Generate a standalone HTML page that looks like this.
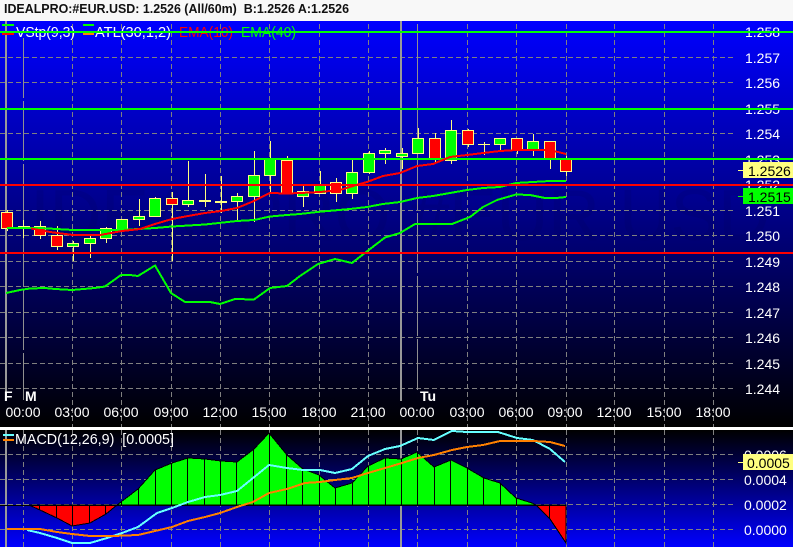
<!DOCTYPE html>
<html><head><meta charset="utf-8"><style>
html,body{margin:0;padding:0;background:#f8f8f8}
svg{display:block}
text{font-family:"Liberation Sans",Arial,sans-serif}
.c{shape-rendering:crispEdges}
.g line{stroke:#808080;stroke-width:1;stroke-dasharray:5 3}
.k line{stroke:#ffff80;stroke-width:1}
.k rect{stroke:#ffff80;stroke-width:1}
.k rect.d{stroke:none;fill:#ffff80}
.k rect.gb,.k rect.rb{width:11px;transform:translateX(-1px)}
.gb{fill:#00ff00}.rb{fill:#ff0000}
.l{fill:none;stroke-width:2;shape-rendering:crispEdges}
.ax text{fill:#fff;font-size:14px}
.t text{fill:#fff;font-size:14px;text-anchor:middle}
.h line{stroke:#000;stroke-width:1}
</style></head><body>
<svg width="793" height="547" viewBox="0 0 793 547" xmlns="http://www.w3.org/2000/svg">
<defs>
<linearGradient id="a" x1="0" y1="0" x2="0" y2="1"><stop offset="0" stop-color="#0000ff"/><stop offset="1" stop-color="#000000"/></linearGradient>
<linearGradient id="b" x1="0" y1="0" x2="0" y2="1"><stop offset="0" stop-color="#000000"/><stop offset="1" stop-color="#0000ff"/></linearGradient>
</defs>
<rect width="793" height="21" fill="#f8f8f8"/>
<rect y="21" width="793" height="406" fill="url(#a)"/>
<rect y="427" width="793" height="3" fill="#ffffff"/>
<rect y="430" width="793" height="117" fill="url(#b)"/>
<text x="4" y="13" font-size="13" font-weight="bold" fill="#111" textLength="345" lengthAdjust="spacingAndGlyphs" xml:space="preserve">IDEALPRO:#EUR.USD: 1.2526 (All/60m)  B:1.2526 A:1.2526</text>

<text x="30" y="240" font-size="72" fill="#000050" fill-opacity="0.13" textLength="740" lengthAdjust="spacing">IDEALPRO:#EUR.USD</text>

<g class="g c">
<line x1="0" x2="735" y1="57.5" y2="57.5"/><line x1="0" x2="735" y1="82.5" y2="82.5"/><line x1="0" x2="735" y1="133.5" y2="133.5"/><line x1="0" x2="735" y1="210.5" y2="210.5"/><line x1="0" x2="735" y1="235.5" y2="235.5"/><line x1="0" x2="735" y1="261.5" y2="261.5"/><line x1="0" x2="735" y1="286.5" y2="286.5"/><line x1="0" x2="735" y1="312.5" y2="312.5"/><line x1="0" x2="735" y1="337.5" y2="337.5"/><line x1="0" x2="735" y1="363.5" y2="363.5"/><line x1="0" x2="735" y1="388.5" y2="388.5"/>
<line x1="0" x2="735" y1="454.5" y2="454.5"/><line x1="0" x2="735" y1="479.5" y2="479.5"/><line x1="0" x2="735" y1="504.5" y2="504.5"/><line x1="0" x2="735" y1="529.5" y2="529.5"/>
<line x1="72.5" x2="72.5" y1="24" y2="427"/><line x1="121.5" x2="121.5" y1="24" y2="427"/><line x1="171.5" x2="171.5" y1="24" y2="427"/><line x1="220.5" x2="220.5" y1="24" y2="427"/><line x1="269.5" x2="269.5" y1="24" y2="427"/><line x1="319.5" x2="319.5" y1="24" y2="427"/><line x1="368.5" x2="368.5" y1="24" y2="427"/><line x1="467.5" x2="467.5" y1="24" y2="427"/><line x1="516.5" x2="516.5" y1="24" y2="427"/><line x1="566.5" x2="566.5" y1="24" y2="427"/><line x1="614.5" x2="614.5" y1="24" y2="427"/><line x1="664.5" x2="664.5" y1="24" y2="427"/><line x1="713.5" x2="713.5" y1="24" y2="427"/>
<line x1="23.5" x2="23.5" y1="430" y2="547"/><line x1="72.5" x2="72.5" y1="430" y2="547"/><line x1="121.5" x2="121.5" y1="430" y2="547"/><line x1="171.5" x2="171.5" y1="430" y2="547"/><line x1="220.5" x2="220.5" y1="430" y2="547"/><line x1="269.5" x2="269.5" y1="430" y2="547"/><line x1="319.5" x2="319.5" y1="430" y2="547"/><line x1="368.5" x2="368.5" y1="430" y2="547"/><line x1="417.5" x2="417.5" y1="430" y2="547"/><line x1="467.5" x2="467.5" y1="430" y2="547"/><line x1="516.5" x2="516.5" y1="430" y2="547"/><line x1="566.5" x2="566.5" y1="430" y2="547"/><line x1="614.5" x2="614.5" y1="430" y2="547"/><line x1="664.5" x2="664.5" y1="430" y2="547"/><line x1="713.5" x2="713.5" y1="430" y2="547"/>
</g>
<g class="c">
<line x1="23.5" x2="23.5" y1="38" y2="400" stroke="#909090" stroke-dasharray="60 3"/>
<line x1="417.5" x2="417.5" y1="24" y2="390" stroke="#909090" stroke-dasharray="60 3"/>
<rect x="5" y="21" width="2" height="380" fill="#999"/>
<rect x="400" y="21" width="2" height="380" fill="#999"/>
<rect x="5" y="430" width="2" height="117" fill="#999"/>
<rect x="400" y="430" width="2" height="117" fill="#999"/>
</g>

<g class="ax">
<text x="745" y="37">1.258</text><text x="745" y="63">1.257</text><text x="745" y="88">1.256</text><text x="745" y="114">1.255</text><text x="745" y="139">1.254</text><text x="745" y="165">1.253</text><text x="745" y="190">1.252</text><text x="745" y="216">1.251</text><text x="745" y="241">1.250</text><text x="745" y="267">1.249</text><text x="745" y="292">1.248</text><text x="745" y="318">1.247</text><text x="745" y="343">1.246</text><text x="745" y="369">1.245</text><text x="745" y="394">1.244</text>
<text x="744" y="460">0.0006</text><text x="744" y="485">0.0004</text><text x="744" y="510">0.0002</text><text x="744" y="535">0.0000</text>
</g>
<g class="t">
<text x="23" y="417">00:00</text><text x="72" y="417">03:00</text><text x="121" y="417">06:00</text><text x="171" y="417">09:00</text><text x="220" y="417">12:00</text><text x="269" y="417">15:00</text><text x="319" y="417">18:00</text><text x="368" y="417">21:00</text><text x="417" y="417">00:00</text><text x="467" y="417">03:00</text><text x="516" y="417">06:00</text><text x="565" y="417">09:00</text><text x="614" y="417">12:00</text><text x="664" y="417">15:00</text><text x="713" y="417">18:00</text>
</g>
<g font-size="14" font-weight="bold" fill="#fff">
<text x="4" y="401">F</text><text x="25" y="401">M</text><text x="420" y="401">Tu</text>
</g>

<g class="c k">
<line x1="7.5" x2="7.5" y1="210" y2="231"/><rect class="rb" x="2.5" y="212.5" width="10" height="16"/>
<line x1="23.5" x2="23.5" y1="220" y2="238"/><rect class="d" x="18" y="226" width="12" height="1"/>
<line x1="40.5" x2="40.5" y1="221" y2="239"/><rect class="rb" x="35.5" y="226.5" width="10" height="9"/>
<line x1="57.5" x2="57.5" y1="226" y2="250"/><rect class="rb" x="52.5" y="235.5" width="10" height="11"/>
<line x1="73.5" x2="73.5" y1="241" y2="261"/><rect class="gb" x="68.5" y="243.5" width="10" height="3"/>
<line x1="90.5" x2="90.5" y1="236" y2="258"/><rect class="gb" x="85.5" y="238.5" width="10" height="5"/>
<line x1="106.5" x2="106.5" y1="227" y2="243"/><rect class="gb" x="101.5" y="228.5" width="10" height="10"/>
<rect class="gb" x="117.5" y="219.5" width="10" height="11"/>
<line x1="139.5" x2="139.5" y1="199" y2="226"/><rect class="gb" x="134.5" y="216.5" width="10" height="3"/>
<line x1="155.5" x2="155.5" y1="197" y2="217"/><rect class="gb" x="150.5" y="198.5" width="10" height="18"/>
<line x1="172.5" x2="172.5" y1="192" y2="261"/><rect class="rb" x="167.5" y="198.5" width="10" height="6"/>
<line x1="188.5" x2="188.5" y1="161" y2="207"/><rect class="gb" x="183.5" y="200.5" width="10" height="4"/>
<line x1="205.5" x2="205.5" y1="174" y2="207"/><rect class="d" x="199" y="200" width="12" height="2"/>
<line x1="221.5" x2="221.5" y1="176" y2="213"/><rect class="d" x="215" y="201" width="12" height="2"/>
<line x1="237.5" x2="237.5" y1="193" y2="221"/><rect class="gb" x="232.5" y="196.5" width="10" height="5"/>
<line x1="254.5" x2="254.5" y1="151" y2="222"/><rect class="gb" x="249.5" y="175.5" width="10" height="21"/>
<line x1="270.5" x2="270.5" y1="141" y2="193"/><rect class="gb" x="265.5" y="159.5" width="10" height="16"/>
<line x1="287.5" x2="287.5" y1="156" y2="194"/><rect class="rb" x="282.5" y="160.5" width="10" height="33"/>
<line x1="303.5" x2="303.5" y1="186" y2="207"/><rect class="gb" x="298.5" y="191.5" width="10" height="5"/>
<line x1="320.5" x2="320.5" y1="171" y2="194"/><rect class="gb" x="315.5" y="185.5" width="10" height="8"/>
<line x1="336.5" x2="336.5" y1="178" y2="202"/><rect class="rb" x="331.5" y="182.5" width="10" height="11"/>
<line x1="352.5" x2="352.5" y1="160" y2="199"/><rect class="gb" x="347.5" y="172.5" width="10" height="21"/>
<line x1="369.5" x2="369.5" y1="151" y2="174"/><rect class="gb" x="364.5" y="153.5" width="10" height="19"/>
<line x1="385.5" x2="385.5" y1="148" y2="164"/><rect class="gb" x="380.5" y="150.5" width="10" height="3"/>
<line x1="402.5" x2="402.5" y1="148" y2="169"/><rect class="gb" x="397.5" y="153.5" width="10" height="3"/>
<line x1="418.5" x2="418.5" y1="128" y2="154"/><rect class="gb" x="413.5" y="138.5" width="10" height="15"/>
<line x1="435.5" x2="435.5" y1="133" y2="163"/><rect class="rb" x="430.5" y="138.5" width="10" height="20"/>
<line x1="451.5" x2="451.5" y1="120" y2="164"/><rect class="gb" x="446.5" y="130.5" width="10" height="30"/>
<line x1="468.5" x2="468.5" y1="129" y2="147"/><rect class="rb" x="463.5" y="130.5" width="10" height="14"/>
<line x1="484.5" x2="484.5" y1="142" y2="155"/><rect class="d" x="478" y="144" width="12" height="1"/>
<line x1="500.5" x2="500.5" y1="138" y2="151"/><rect class="gb" x="495.5" y="138.5" width="10" height="6"/>
<line x1="517.5" x2="517.5" y1="138" y2="154"/><rect class="rb" x="512.5" y="138.5" width="10" height="12"/>
<line x1="533.5" x2="533.5" y1="134" y2="156"/><rect class="gb" x="528.5" y="141.5" width="10" height="9"/>
<line x1="550.5" x2="550.5" y1="141" y2="169"/><rect class="rb" x="545.5" y="141.5" width="10" height="18"/>
<line x1="566.5" x2="566.5" y1="156" y2="176"/><rect class="rb" x="561.5" y="159.5" width="10" height="12"/>
</g>

<g class="c">
<rect x="0" y="108" width="793" height="2" fill="#00ff00"/>
<rect x="0" y="158" width="793" height="2" fill="#00ff00"/>
</g>
<polyline class="l" stroke="#00ff00" points="6,293 20,290 30,288.5 45,288 55,289 72,290 95,288 105,286.5 121,275 130,275 138,276 155,265.5 171,293 185,302 210,302 220,304 235,299 254,299.5 270,288 287,286 300,276 318,264 335,259 352,263 370,249 385,237.5 400,233 415,224 452,224 470,217 483,207 497,200 516,194.5 530,195 545,198 556,198 566,197"/>
<polyline class="l" stroke="#00ff00" points="7,228 40,228 73,230 122,230 155,228 172,226.5 205,224.5 237,221 254,220 270,216.5 287,215 300,214 317,212 350,209 367,207 383,204 400,202 417,198 433,196 450,193 467,190 483,188 500,187 516,183 533,182 550,181 566,181"/>
<polyline class="l" stroke="#ff0000" points="31,228.5 50,232 73,235 100,235 122,231 140,229 155,224 172,219 188,216 205,213 221,211 237,208 254,201 270,193 287,193.5 300,193 320,192 340,190 353,186 367,182 383,176 400,173 417,166 433,164 450,157 467,155 483,153 500,151 517,150 550,150 566,154"/>
<g class="c">
<rect x="0" y="184" width="793" height="2" fill="#ff0000"/>
<rect x="0" y="252" width="793" height="2" fill="#ff0000"/>
</g>

<g class="c">
<rect x="738" y="170" width="5" height="1" fill="#ffff80"/>
<rect x="743" y="162" width="50" height="16" fill="#ffff80"/>
<rect x="738" y="196" width="5" height="1" fill="#00ff00"/>
<rect x="743" y="188" width="50" height="16" fill="#00ff00"/>
<rect x="738" y="462" width="5" height="1" fill="#ffff80"/>
<rect x="743" y="454" width="50" height="16" fill="#ffff80"/>
</g>
<g font-size="14" fill="#000">
<text x="748" y="176">1.2526</text><text x="748" y="202">1.2515</text><text x="747" y="468">0.0005</text>
</g>

<g class="c">
<rect x="2" y="24" width="12" height="2" fill="#00ff00"/><rect x="2" y="33" width="12" height="2" fill="#ff0000"/>
<rect x="83" y="24" width="11" height="2" fill="#00ff00"/><rect x="83" y="33" width="11" height="2" fill="#ff8000"/>
</g>
<g font-size="14.5">
<text x="16" y="37" fill="#fff" textLength="59" lengthAdjust="spacingAndGlyphs">VStp(9,3)</text>
<text x="95" y="37" fill="#fff" textLength="76" lengthAdjust="spacingAndGlyphs">ATL(30,1,2)</text>
<text x="179" y="37" fill="#ff0000" textLength="54" lengthAdjust="spacingAndGlyphs">EMA(10)</text>
<text x="241" y="37" fill="#00ff00" textLength="55" lengthAdjust="spacingAndGlyphs">EMA(40)</text>
</g>
<rect x="0" y="31" width="793" height="2" fill="#00ff00" class="c"/>

<polygon class="c" fill="#ff0000" stroke="#000" stroke-width="1" points="29,505 40,510 57,518 72,526 90,523 106,514 117,505"/>
<polygon class="c" fill="#00ff00" stroke="#000" stroke-width="1" points="117,505 138,489 155,470 172,463 188,458 205,459 221,461 237,462 254,449 269,433 287,455 303,469 319,475 335,488 352,483 368,466 385,458 401,459 417,452 434,467 451,460 467,468 484,478 500,483 516,498 532,503 536,505"/>
<polygon class="c" fill="#ff0000" stroke="#000" stroke-width="1" points="536,505 550,519 566,543 566,505"/>
<g class="h c">
<line x1="39.5" x2="39.5" y1="505" y2="510"/><line x1="56.5" x2="56.5" y1="505" y2="518"/><line x1="72.5" x2="72.5" y1="505" y2="526"/><line x1="89.5" x2="89.5" y1="505" y2="523"/><line x1="105.5" x2="105.5" y1="505" y2="514"/><line x1="121.5" x2="121.5" y1="502" y2="505"/><line x1="138.5" x2="138.5" y1="489" y2="505"/><line x1="155.5" x2="155.5" y1="470" y2="505"/><line x1="171.5" x2="171.5" y1="463" y2="505"/><line x1="187.5" x2="187.5" y1="458" y2="505"/><line x1="204.5" x2="204.5" y1="459" y2="505"/><line x1="220.5" x2="220.5" y1="461" y2="505"/><line x1="236.5" x2="236.5" y1="462" y2="505"/><line x1="253.5" x2="253.5" y1="449" y2="505"/><line x1="269.5" x2="269.5" y1="433" y2="505"/><line x1="286.5" x2="286.5" y1="455" y2="505"/><line x1="302.5" x2="302.5" y1="469" y2="505"/><line x1="319.5" x2="319.5" y1="475" y2="505"/><line x1="335.5" x2="335.5" y1="488" y2="505"/><line x1="352.5" x2="352.5" y1="483" y2="505"/><line x1="368.5" x2="368.5" y1="466" y2="505"/><line x1="385.5" x2="385.5" y1="458" y2="505"/><line x1="401.5" x2="401.5" y1="459" y2="505"/><line x1="417.5" x2="417.5" y1="452" y2="505"/><line x1="434.5" x2="434.5" y1="467" y2="505"/><line x1="450.5" x2="450.5" y1="460" y2="505"/><line x1="467.5" x2="467.5" y1="468" y2="505"/><line x1="483.5" x2="483.5" y1="478" y2="505"/><line x1="500.5" x2="500.5" y1="483" y2="505"/><line x1="516.5" x2="516.5" y1="498" y2="505"/><line x1="549.5" x2="549.5" y1="505" y2="519"/>
</g>
<rect class="c" x="0" y="505" width="566" height="1" fill="#000"/>

<polyline class="l" stroke="#66ffff" points="27,530 40,533 57,538 72,543 90,543 107,538 122,533 138,527 157,513 172,508 188,502 205,497 220,495 237,491 253,478 269,465 287,468 303,470 320,470 335,473 352,469 368,456 385,449 400,446 418,438 434,440 452,431 467,432 498,432 517,438 533,440 550,449 565,462"/>
<polyline class="l" stroke="#ff8000" points="7,529 40,529 57,532 72,534 90,536 113,536 138,535 155,531 172,527 188,521 205,517 220,513 237,507 253,502 269,493 287,489 305,483 320,482 335,480 352,478 368,473 385,468 402,463 418,458 434,455 452,450 467,447 483,445 500,441 517,441 533,441 550,442 565,446"/>

<g class="c">
<rect x="3" y="434" width="11" height="2" fill="#66ffff"/><rect x="3" y="439" width="11" height="2" fill="#ff8000"/>
</g>
<text x="15" y="444" font-size="14.5" fill="#fff" textLength="159" lengthAdjust="spacingAndGlyphs" xml:space="preserve">MACD(12,26,9)  [0.0005]</text>
</svg>
</body></html>
